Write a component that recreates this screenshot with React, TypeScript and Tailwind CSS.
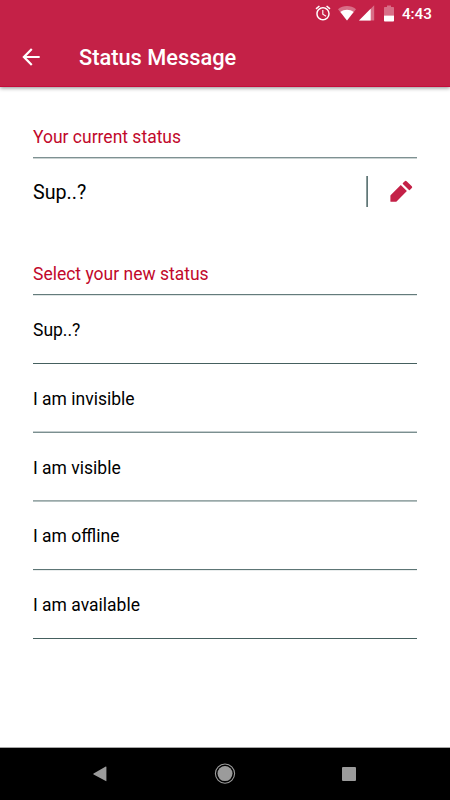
import { clsx } from 'clsx';

// top / bottom pixel shades of each divider
const STATUSES = [
  { label: 'Sup..?', line: 'border-t-[#45605f] border-b-white' },
  { label: 'I am invisible', line: 'border-t-[#c4cdce] border-b-[#7b8f90]', early: true },
  { label: 'I am visible', line: 'border-t-[#99a8a8] border-b-[#b4c0c0]', early: true },
  { label: 'I am offline', line: 'border-t-[#5d7575] border-b-[#e9eded]' },
  { label: 'I am available', line: 'border-t-[#45605f] border-b-white' },
];

function StatusBar() {
  return (
    <div className="h-[26px] flex items-center justify-end pr-[18px] text-white">
      <svg className="w-[18px] h-[18px] mr-[6px]" viewBox="0 0 24 24" fill="currentColor">
        <path d="M22 5.72l-4.6-3.86-1.29 1.53 4.6 3.86L22 5.72zM7.88 3.39L6.6 1.86 2 5.71l1.29 1.53 4.59-3.85zM12.5 8H11v6l4.75 2.85.75-1.23-4-2.37V8zM12 4c-4.97 0-9 4.03-9 9s4.02 9 9 9a9 9 0 0 0 0-18zm0 16c-3.87 0-7-3.13-7-7s3.13-7 7-7 7 3.13 7 7-3.13 7-7 7z" />
      </svg>
      <svg className="w-[18px] h-[16px] mr-[3px]" viewBox="0 0 18 16" fill="currentColor">
        <path d="M9 15.5L0 4.2C5-.2 13-.2 18 4.2z" opacity=".35" />
        <path d="M9 15.5L2.4 7C6 3.9 12 3.9 15.6 7z" />
      </svg>
      <svg className="w-[16px] h-[16px] mr-[9px]" viewBox="0 0 16 16" fill="currentColor">
        <path d="M0 15.5L15.2.3v15.2z" opacity=".35" />
        <path d="M0 15.5L11.7 3.8v11.7z" />
      </svg>
      <svg className="w-[10px] h-[17px] mr-[8px]" viewBox="0 0 10 17" fill="currentColor">
        <path d="M0 10.5V2.8Q0 2 .8 2H3V.5h4V2h2.2q.8 0 .8.8v7.7z" opacity=".35" />
        <path d="M0 10.5h10v5.2q0 .8-.8.8H.8q-.8 0-.8-.8z" />
      </svg>
      <span className="pt-[3px] text-[15.3px] leading-none font-medium">4:43</span>
    </div>
  );
}

function Header() {
  return (
    <header className="relative h-[87px] shrink-0 bg-[#c42147] border-b border-[#c40c3b] shadow-[0_1px_4px_rgba(0,0,0,0.45)]">
      <StatusBar />
      <div className="h-[61px] flex items-center pl-[18px] text-white">
        <button className="w-[26px] h-[26px]" aria-label="Back">
          <svg viewBox="0 0 24 24" fill="currentColor">
            <path d="M20 11H7.83l5.59-5.59L12 4l-8 8 8 8 1.41-1.41L7.83 13H20v-2z" />
          </svg>
        </button>
        <h1 className="ml-[35px] pt-[2px] text-[21.8px] leading-none font-medium">Status Message</h1>
      </div>
    </header>
  );
}

function NavBar() {
  return (
    <nav className="h-[53px] shrink-0 bg-black border-t border-[#a6a6a6] flex items-center justify-between pl-[93px] pr-[93px] text-[#9b9b9b]">
      <svg className="w-[14px] h-[16px]" viewBox="0 0 14 16" fill="currentColor">
        <path d="M.6 7.4L12.8.6q.6-.2.6.5v13.6q0 .7-.6.4L.6 8.4q-.7-.5 0-1z" />
      </svg>
      <svg className="w-[22px] h-[22px]" viewBox="0 0 22 22">
        <circle cx="11" cy="10.6" r="9.6" fill="none" stroke="currentColor" strokeWidth="1.1" />
        <circle cx="11" cy="10.6" r="7.5" fill="currentColor" />
      </svg>
      <div className="w-[14px] h-[14px] mr-[1px] rounded-[1px] bg-[#9b9b9b]" />
    </nav>
  );
}

export default function App() {
  return (
    <div className="h-screen flex flex-col bg-white text-black font-[Roboto,sans-serif]">
      <Header />
      <main className="flex-1 px-[33px] pt-[37px]">
        <h2 className="h-[33px] pt-[3px] text-[17.5px] leading-[21px] text-[#c1082b]">Your current status</h2>
        <div className="border-t border-b border-t-[#7e9192] border-b-[#cbd3d3]" />
        <div className="h-[67px] flex items-center justify-between">
          <span className="text-[19.7px] leading-none">Sup..?</span>
          <div className="flex items-center">
            <div className="w-[2px] h-[31px] mb-[3px] border-l border-r border-l-[#8a9b9b] border-r-[#607777]" />
            <button className="ml-[22px] mr-[4px] mb-[3px] text-[#c42147]" aria-label="Edit">
              <svg className="w-[23px] h-[23px]" viewBox="0 0 23 23" fill="currentColor">
                <path d="M.4 21.2V15.8q0-.5.4-.9L10.8 5.1 16.9 10.9 6.8 21.2q-.5.5-1.1.5H.9q-.5 0-.5-.5z" />
                <path d="M12.9 3.1L14.8 1.2q.9-.9 1.8 0l5.2 5.1q.9.9 0 1.8L19.8 10q-.4.3-.8-.1L12.9 4q-.4-.4 0-.9z" />
              </svg>
            </button>
          </div>
        </div>

        <h2 className="h-[31px] mt-[37px] pt-px text-[17.5px] leading-[21px] text-[#c1082b]">Select your new status</h2>
        <div className="border-t border-b border-t-[#647b7b] border-b-[#dfe5e5]" />
        <ul>
          {STATUSES.map((s) => (
            <li key={s.label} className="h-[69px] -mb-[0.2px] flex flex-col">
              <span className="flex-1 pt-[24px] text-[17.5px] leading-[21px]">{s.label}</span>
              <div className={clsx('border-t border-b', s.line, s.early && '-translate-y-px')} />
            </li>
          ))}
        </ul>
      </main>
      <NavBar />
    </div>
  );
}
